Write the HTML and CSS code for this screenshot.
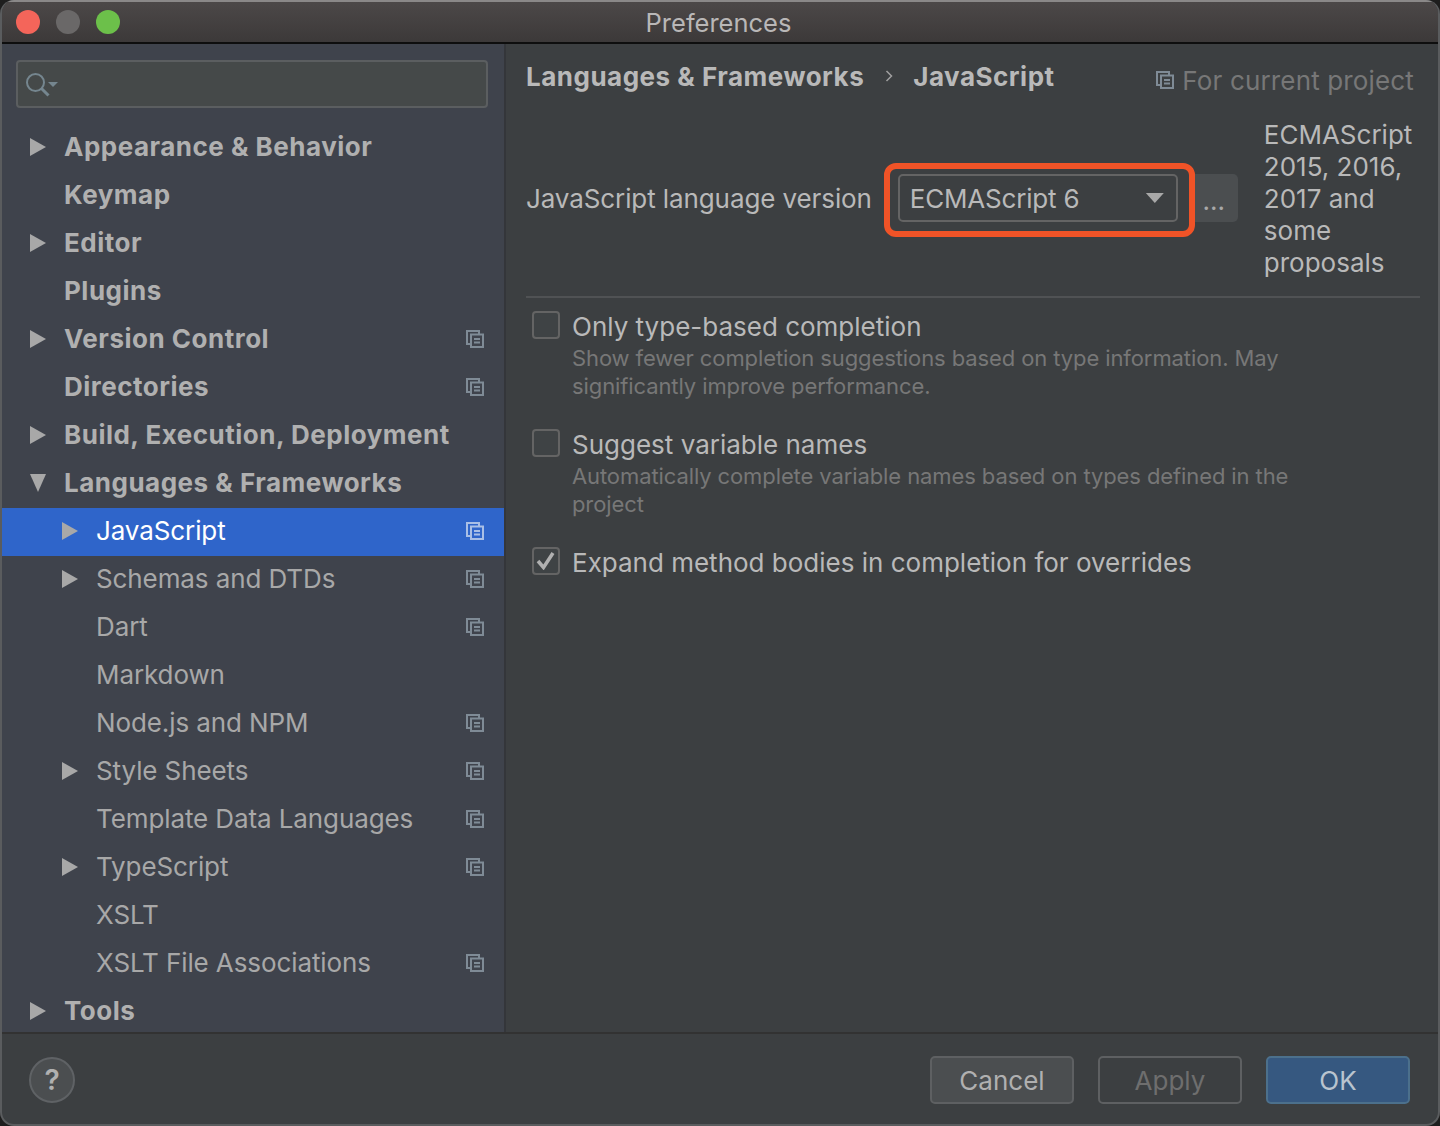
FILE: index.html
```html
<!DOCTYPE html>
<html lang="en">
<head>
  <meta charset="UTF-8">
  <title>Preferences</title>
  <link rel="stylesheet" href="styles.css">
</head>
<body>

  <svg class="defs" width="0" height="0">
    <symbol id="copy" viewBox="0 0 18 18">
      <path d="M5 14H1V1h12v3" fill="none" stroke="currentColor" stroke-width="2"/>
      <path d="M5 4.500h12v12.500H5z" fill="none" stroke="currentColor" stroke-width="2"/>
      <path d="M8 9h6M8 12.500h6" fill="none" stroke="currentColor" stroke-width="2"/>
    </symbol>
  </svg>

  <div class="window">

    <div class="titlebar">
      <div class="lights">
        <span class="light red"></span>
        <span class="light grey"></span>
        <span class="light green"></span>
      </div>
      <div class="title">Preferences</div>
    </div>

    <div class="content">

      <div class="sidebar">
        <div class="search">
          <svg width="34" height="28" viewBox="0 0 34 28">
            <circle cx="9.500" cy="10.500" r="8.500" fill="none" stroke="#75868f" stroke-width="2"/>
            <path d="M15.500 16.500l7 7" stroke="#75868f" stroke-width="3"/>
            <path d="M22 10h10l-5 5z" fill="#75868f"/>
          </svg>
        </div>
        <div class="tree">
          <div class="row top"><span class="arrow right"></span><span class="name">Appearance &amp; Behavior</span></div>
          <div class="row top"><span class="arrow"></span><span class="name">Keymap</span></div>
          <div class="row top"><span class="arrow right"></span><span class="name">Editor</span></div>
          <div class="row top"><span class="arrow"></span><span class="name">Plugins</span></div>
          <div class="row top"><span class="arrow right"></span><span class="name">Version Control</span><svg class="copy"><use href="#copy"/></svg></div>
          <div class="row top"><span class="arrow"></span><span class="name">Directories</span><svg class="copy"><use href="#copy"/></svg></div>
          <div class="row top"><span class="arrow right"></span><span class="name">Build, Execution, Deployment</span></div>
          <div class="row top"><span class="arrow down"></span><span class="name">Languages &amp; Frameworks</span></div>
          <div class="row sub selected"><span class="arrow right"></span><span class="name">JavaScript</span><svg class="copy"><use href="#copy"/></svg></div>
          <div class="row sub"><span class="arrow right"></span><span class="name">Schemas and DTDs</span><svg class="copy"><use href="#copy"/></svg></div>
          <div class="row sub"><span class="arrow"></span><span class="name">Dart</span><svg class="copy"><use href="#copy"/></svg></div>
          <div class="row sub"><span class="arrow"></span><span class="name">Markdown</span></div>
          <div class="row sub"><span class="arrow"></span><span class="name">Node.js and NPM</span><svg class="copy"><use href="#copy"/></svg></div>
          <div class="row sub"><span class="arrow right"></span><span class="name">Style Sheets</span><svg class="copy"><use href="#copy"/></svg></div>
          <div class="row sub"><span class="arrow"></span><span class="name">Template Data Languages</span><svg class="copy"><use href="#copy"/></svg></div>
          <div class="row sub"><span class="arrow right"></span><span class="name">TypeScript</span><svg class="copy"><use href="#copy"/></svg></div>
          <div class="row sub"><span class="arrow"></span><span class="name">XSLT</span></div>
          <div class="row sub"><span class="arrow"></span><span class="name">XSLT File Associations</span><svg class="copy"><use href="#copy"/></svg></div>
          <div class="row top"><span class="arrow right"></span><span class="name">Tools</span></div>
        </div>
      </div>

      <div class="main">
        <div class="crumbs">
          <span class="crumb">Languages &amp; Frameworks</span>
          <svg class="chevron" width="8" height="12" viewBox="0 0 8 12"><path d="M1.500 1l5 5-5 5" fill="none" stroke="#a0a0a0" stroke-width="1.500"/></svg>
          <span class="crumb">JavaScript</span>
          <span class="scope"><svg class="copy"><use href="#copy"/></svg>For current project</span>
        </div>

        <div class="version">
          <span class="version-label">JavaScript language version</span>
          <div class="select">
            <span>ECMAScript 6</span>
            <span class="caret"></span>
            <div class="highlight"></div>
          </div>
          <div class="more">...</div>
          <div class="version-note">ECMAScript 2015, 2016, 2017 and some proposals</div>
        </div>

        <div class="options">
          <div class="option">
            <span class="check"></span>
            <div>
              <div class="option-label">Only type-based completion</div>
              <div class="option-help">Show fewer completion suggestions based on type information. May significantly improve performance.</div>
            </div>
          </div>
          <div class="option">
            <span class="check"></span>
            <div>
              <div class="option-label">Suggest variable names</div>
              <div class="option-help">Automatically complete variable names based on types defined in the project</div>
            </div>
          </div>
          <div class="option">
            <span class="check">
              <svg width="20" height="18" viewBox="0 0 20 18"><path d="M2 9l5.500 6.500L17 1" fill="none" stroke="#b0b0b0" stroke-width="3.500"/></svg>
            </span>
            <div>
              <div class="option-label">Expand method bodies in completion for overrides</div>
            </div>
          </div>
        </div>
      </div>

    </div>

    <div class="footer">
      <div class="help">?</div>
      <div class="buttons">
        <div class="btn">Cancel</div>
        <div class="btn disabled">Apply</div>
        <div class="btn primary">OK</div>
      </div>
    </div>

  </div>

</body>
</html>
```

FILE: styles.css
```css
* {
  box-sizing: border-box;
}
html, body {
  margin: 0;
  height: 100%;
}
body {
  background: #1e1e1e;
  font-family: 'Inter', 'Liberation Sans', sans-serif;
  font-size: 26px;
  overflow: hidden;
}
.defs {
  position: absolute;
}
.window {
  height: 1126px;
  display: flex;
  flex-direction: column;
  background: #3c3f41;
  border-radius: 14px;
  border: 2px solid #5a5c5e;
  border-top: 0;
  border-bottom-width: 2px;
  overflow: hidden;
}
.titlebar {
  height: 44px;
  flex: none;
  position: relative;
  display: flex;
  align-items: center;
  justify-content: center;
  background: linear-gradient(#4c4848, #3c3939);
  border-top: 2px solid #8a8888;
  border-bottom: 2px solid #0e0e0e;
}
.lights {
  position: absolute;
  left: 14px;
  top: 8px;
  display: flex;
  gap: 16px;
}
.light {
  width: 24px;
  height: 24px;
  border-radius: 50%;
}
.red { background: #f4655a; }
.grey { background: #6a6868; }
.green { background: #6cc04a; }
.title {
  color: #b9b7b7;
  font-size: 25.500px;
  margin-right: 3px;
  padding-top: 1px;
}
.content {
  flex: 1;
  display: flex;
  min-height: 0;
}
.sidebar {
  flex: none;
  margin-left: -2px;
  padding-left: 2px;
  background: #3f434c;
  border-right: 2px solid #34363a;
  width: 506px;
}
.search {
  height: 48px;
  margin: 16px 16px 16px 14px;
  padding: 10px 0 0 8px;
  background: #454949;
  border: 2px solid #5b5e60;
  border-radius: 4px;
}
.search svg {
  display: block;
}
.row {
  height: 48px;
  display: flex;
  align-items: center;
  color: #a8a8a8;
  padding-right: 20px;
  padding-bottom: 2px;
  letter-spacing: -0.1px;
}
.row.top {
  padding-left: 28px;
  font-weight: 700;
  color: #b0b0b0;
  letter-spacing: 0.5px;
}
.row.sub {
  padding-left: 60px;
}
.row.selected {
  background: #2f65ca;
  color: #fff;
}
.arrow {
  width: 16px;
  height: 18px;
  flex: none;
  margin-right: 18px;
}
.arrow.right {
  background: #a8a8a8;
  clip-path: polygon(0 0, 100% 50%, 0 100%);
}
.arrow.down {
  background: #a8a8a8;
  clip-path: polygon(0 0, 100% 0, 50% 100%);
}
.name {
  flex: 1;
  white-space: nowrap;
  padding-bottom: 2px;
}
.copy {
  width: 18px;
  height: 18px;
  flex: none;
  color: #7f8b96;
}
.selected .copy {
  color: #a9bfe6;
}
.main {
  flex: 1;
  min-width: 0;
  padding: 0 18px 0 20px;
}
.crumbs {
  height: 64px;
  display: flex;
  align-items: center;
  padding-top: 2px;
  color: #b9b9b9;
}
.crumb {
  font-weight: 700;
  letter-spacing: 0.5px;
  padding-bottom: 2px;
}
.chevron {
  margin: 0 20px 2px 21px;
}
.scope {
  margin-left: auto;
  margin-right: 6px;
  display: flex;
  align-items: center;
  gap: 8px;
  padding-top: 6px;
  color: #777;
  letter-spacing: 0.15px;
}
.version {
  height: 190px;
  display: flex;
  align-items: center;
  padding-bottom: 8px;
  color: #b9b9b9;
  border-bottom: 2px solid #505254;
}
.version-label {
  margin-right: 26px;
  white-space: nowrap;
  letter-spacing: -0.1px;
}
.select {
  position: relative;
  width: 280px;
  height: 48px;
  flex: none;
  display: flex;
  align-items: center;
  justify-content: space-between;
  padding: 0 12px 0 10px;
  border: 2px solid #646464;
  border-radius: 5px;
  background: #3c3f41;
  letter-spacing: -0.2px;
}
.caret {
  width: 18px;
  height: 10px;
  background: #a8a8a8;
  clip-path: polygon(0 0, 100% 0, 50% 100%);
}
.highlight {
  position: absolute;
  left: -16px;
  top: -13px;
  width: 311px;
  height: 74px;
  border: 6px solid #f05327;
  border-radius: 12px;
}
.more {
  width: 48px;
  height: 48px;
  flex: none;
  margin-left: 12px;
  border-radius: 5px;
  background: #4b4e50;
  color: #a8a8a8;
  text-align: center;
  line-height: 54px;
}
.version-note {
  margin-left: 26px;
  width: 150px;
  padding-top: 2px;
  line-height: 32px;
}
.options {
  padding: 13px 0 0 6px;
}
.option {
  display: flex;
  gap: 12px;
  margin-bottom: 30px;
}
.check {
  width: 28px;
  height: 28px;
  flex: none;
  display: flex;
  align-items: center;
  justify-content: center;
  background: #3f4345;
  border: 2px solid #646464;
  border-radius: 4px;
}
.option-label {
  color: #b9b9b9;
  line-height: 32px;
}
.option-help {
  width: 740px;
  margin: 1px 0 -1px;
  color: #777;
  font-size: 22px;
  line-height: 28px;
  letter-spacing: -0.1px;
}
.footer {
  height: 92px;
  flex: none;
  display: flex;
  align-items: center;
  justify-content: space-between;
  padding: 2px 28px 0 27px;
  border-top: 2px solid #323232;
}
.help {
  width: 46px;
  height: 46px;
  border-radius: 50%;
  background: #4b4e50;
  border: 2px solid #5f6265;
  color: #b0b0b0;
  font-weight: 600;
  text-align: center;
  line-height: 42px;
  font-size: 28px;
}
.buttons {
  display: flex;
  gap: 24px;
}
.btn {
  width: 144px;
  height: 48px;
  border-radius: 5px;
  background: #4b4e50;
  border: 2px solid #5e6062;
  color: #b0b0b0;
  text-align: center;
  line-height: 46px;
}
.btn.disabled {
  background: #3c3f41;
  color: #6e6e6e;
}
.btn.primary {
  background: #365880;
  border-color: #4c708c;
  color: #b9c4cf;
}
```
